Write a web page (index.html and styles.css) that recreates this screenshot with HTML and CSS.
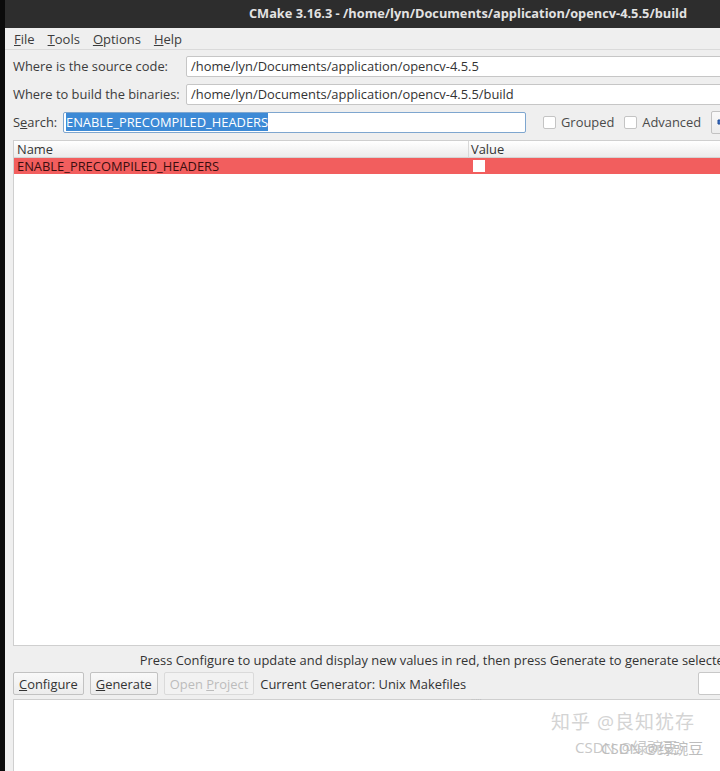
FILE: index.html
```html
<!DOCTYPE html>
<html lang="en">
  <head>
    <meta charset="UTF-8" />
    <meta name="viewport" content="width=device-width, initial-scale=1.0" />
    <title>CMake</title>
    <link rel="stylesheet" href="styles.css">
  </head>
  <body>
    <div class="janela">
      <div class="titulo">CMake 3.16.3 - /home/lyn/Documents/application/opencv-4.5.5/build</div>
      <div class="menu">
        <span><u>F</u>ile</span>
        <span><u>T</u>ools</span>
        <span><u>O</u>ptions</span>
        <span><u>H</u>elp</span>
      </div>
      <div class="conteudo">
        <div class="linha">
          <label class="rotulo">Where is the source code:</label>
          <div class="campo">/home/lyn/Documents/application/opencv-4.5.5</div>
        </div>
        <div class="linha">
          <label class="rotulo">Where to build the binaries:</label>
          <div class="campo">/home/lyn/Documents/application/opencv-4.5.5/build</div>
        </div>
        <div class="linha busca">
          <label class="rotulo">S<u>e</u>arch:</label>
          <div class="campo campo-busca"><span class="selecao">ENABLE_PRECOMPILED_HEADERS</span></div>
          <span class="opcao"><span class="caixa"></span>Grouped</span>
          <span class="opcao"><span class="caixa"></span>Advanced</span>
          <button class="botao botao-add">
            <svg width="14" height="14" viewBox="0 0 14 14">
              <path d="M5 1h4v4h4v4h-4v4h-4v-4h-4v-4h4z" fill="#3a6fc4" stroke="#1f4a94" stroke-width="1" />
            </svg>
            <span>Add Entry</span>
          </button>
        </div>
        <div class="tabela">
          <div class="cabecalho">
            <div class="col-nome">Name</div>
            <div class="col-valor">Value</div>
          </div>
          <div class="registro">
            <div class="col-nome">ENABLE_PRECOMPILED_HEADERS</div>
            <div class="col-valor"><span class="check"></span></div>
          </div>
        </div>
        <div class="aviso">Press Configure to update and display new values in red, then press Generate to generate selected build files.</div>
        <div class="acoes">
          <button class="botao"><u>C</u>onfigure</button>
          <button class="botao"><u>G</u>enerate</button>
          <button class="botao desativado">Open <u>P</u>roject</button>
          <span class="gerador">Current Generator: Unix Makefiles</span>
          <span class="progresso"></span>
        </div>
      </div>
      <div class="saida">
        <span class="alca">.....</span>
        <div class="marca">
          <span class="zhihu">知乎 @良知犹存</span>
          <span class="csdn">CSDN @绿豌豆</span>
          <span class="csdn csdn2">CSDN @绿豌豆</span>
        </div>
      </div>
    </div>
  </body>
</html>
```

FILE: styles.css
```css
* {
  margin: 0;
  padding: 0;
  box-sizing: border-box;
}
body {
  background-color: #0b0b0b;
  overflow: hidden;
  height: 771px;
  font-family: "Open Sans", "Noto Sans CJK SC", sans-serif;
  font-size: 12.9px;
  color: #3c3c3c;
}
.janela {
  margin-left: 5px;
  width: 926px;
  height: 771px;
  background-color: #efefef;
}
.titulo {
  height: 28px;
  background-color: #2d2d2d;
  color: #e2e2e2;
  font-weight: bold;
  font-size: 12.8px;
  line-height: 27px;
  text-align: center;
}
.menu {
  height: 22px;
  display: flex;
  gap: 13px;
  padding-left: 9px;
  align-items: center;
  font-size: 13px;
  border-bottom: 1px solid #dadada;
}
.conteudo {
  padding: 0 8px;
}
.linha {
  display: flex;
  align-items: center;
  height: 28px;
  margin-top: 2px;
}
.linha + .linha {
  margin-top: 0;
}
.rotulo {
  width: 173px;
  flex: none;
  white-space: nowrap;
}
.campo {
  flex: 1;
  height: 21px;
  background-color: white;
  border: 1px solid #c6c6c6;
  border-radius: 2px;
  padding: 0 4px;
  line-height: 19px;
  color: #333;
  white-space: nowrap;
}
.busca .rotulo {
  width: 50px;
}
.campo-busca {
  flex: none;
  width: 463px;
  border-color: #7ea6cf;
  padding: 0 2px;
}
.selecao {
  background-color: #3d8ad6;
  color: white;
}
.opcao {
  display: flex;
  align-items: center;
  margin-left: 17px;
  color: #4a4a4a;
  white-space: nowrap;
}
.opcao + .opcao {
  margin-left: 10px;
}
.caixa {
  width: 13px;
  height: 13px;
  background-color: white;
  border: 1px solid #c4c4c4;
  border-radius: 2px;
  margin-right: 5px;
}
.botao {
  flex: none;
  height: 23px;
  padding: 0 5px;
  font-family: inherit;
  font-size: 12.9px;
  color: #333;
  background: linear-gradient(#f9f9f9, #ececec);
  border: 1px solid #c2c2c2;
  border-radius: 2px;
  white-space: nowrap;
}
.botao-add {
  margin-left: 10px;
  display: flex;
  align-items: center;
  gap: 4px;
}
.tabela {
  margin-top: 4px;
  height: 506px;
  background-color: white;
  border: 1px solid #cfcfcf;
}
.cabecalho {
  display: flex;
  height: 17px;
  background: linear-gradient(#ffffff, #ececec);
  border-bottom: 1px solid #d4d4d4;
  line-height: 16px;
  color: #333;
}
.col-nome {
  width: 455px;
  padding-left: 3px;
  border-right: 1px solid #d8d8d8;
}
.col-valor {
  padding-left: 2px;
}
.registro {
  display: flex;
  height: 16px;
  background-color: #f25e5e;
  line-height: 16px;
  color: #3a0e0e;
}
.registro .col-nome {
  border-right: none;
}
.registro .col-valor {
  padding-left: 4px;
  display: flex;
  align-items: center;
}
.check {
  width: 12px;
  height: 12px;
  background-color: white;
}
.aviso {
  text-align: center;
  margin-top: 5px;
  height: 18px;
  line-height: 18px;
  color: #333;
  white-space: nowrap;
}
.acoes {
  display: flex;
  align-items: center;
  gap: 6px;
  margin-top: 3px;
  height: 23px;
}
.desativado {
  color: #bcbcbc;
  background: #f2f2f2;
  border-color: #dadada;
}
.gerador {
  color: #333;
  white-space: nowrap;
  flex: none;
}
.progresso {
  flex: none;
  margin-left: 226px;
  width: 200px;
  height: 23px;
  background-color: white;
  border: 1px solid #c8c8c8;
  border-radius: 2px;
}
.saida {
  margin: 4px 0 0 8px;
  height: 80px;
  background-color: white;
  border-top: 1px solid #cfcfcf;
  border-left: 1px solid #cfcfcf;
  position: relative;
}
.alca {
  position: absolute;
  left: 457px;
  top: -9px;
  font-size: 8px;
  color: #bbb;
  letter-spacing: 0;
}
.marca {
  position: absolute;
  left: 537px;
  top: 7px;
  width: 200px;
  height: 60px;
  color: #d4d4d4;
}
.zhihu {
  position: absolute;
  left: 0;
  top: 0;
  font-size: 19px;
  letter-spacing: 1px;
}
.csdn {
  position: absolute;
  left: 24px;
  top: 29px;
  font-size: 15px;
  color: #c8c8c8;
}
.csdn2 {
  left: 50px;
  top: 30px;
  color: #bdbdbd;
}
```
